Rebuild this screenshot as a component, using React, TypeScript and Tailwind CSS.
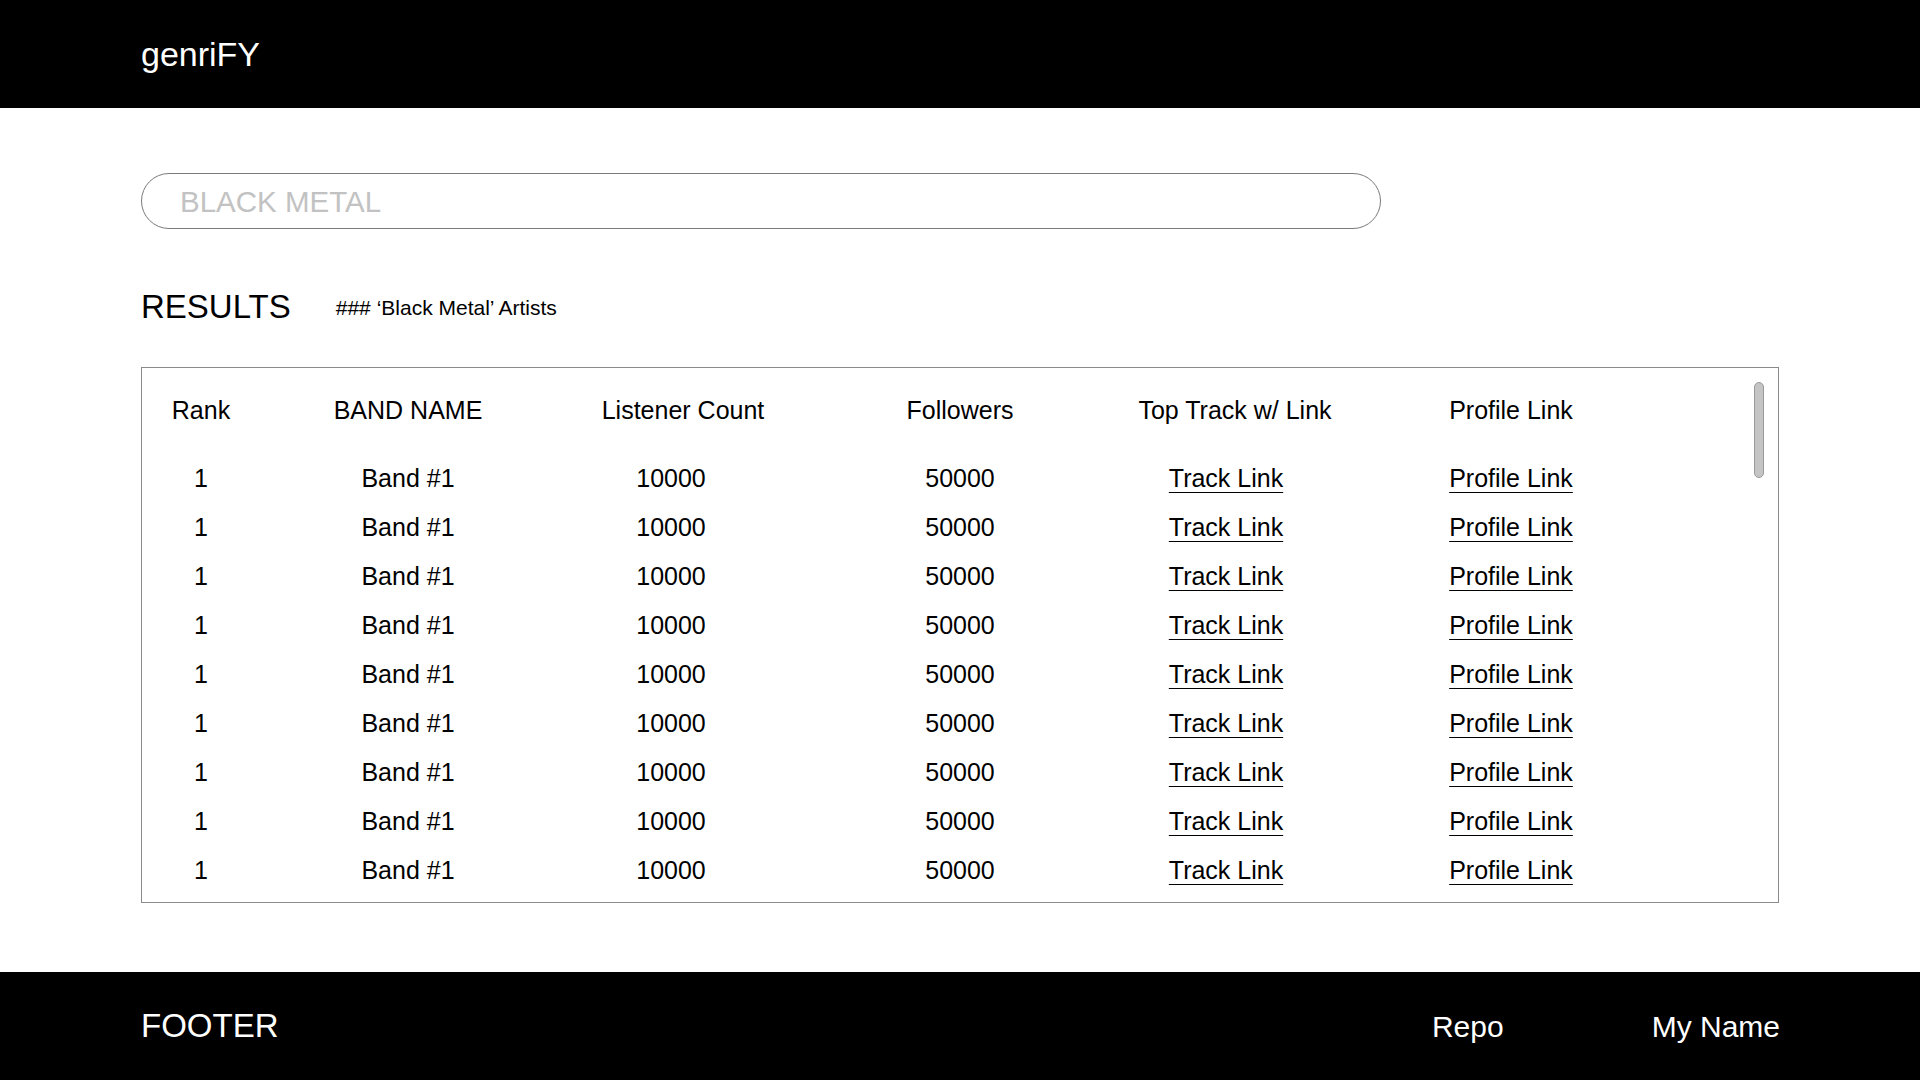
import React from 'react';

const FONT = { fontFamily: '"Liberation Sans", Arial, sans-serif' };

interface Artist {
  rank: number;
  name: string;
  listeners: number;
  followers: number;
}

const artists: Artist[] = Array.from({ length: 9 }, () => ({
  rank: 1,
  name: 'Band #1',
  listeners: 10000,
  followers: 50000,
}));

const cols = 'grid grid-cols-[118px_296px_230px_348px_184px_386px]';
const cell = 'flex justify-center whitespace-nowrap';

const Header: React.FC = () => (
  <header className="h-[108px] bg-black flex items-center px-[141px]">
    <span className="text-white text-[34px] leading-none">genriFY</span>
  </header>
);

const Footer: React.FC = () => (
  <footer className="h-[108px] bg-black flex items-center justify-between pl-[141px] pr-[140px] text-white">
    <span className="text-[33px] leading-none -mt-[2px]">FOOTER</span>
    <div className="flex items-center gap-[148px] text-[30px] leading-none mt-[2px]">
      <a href="#">Repo</a>
      <a href="#">My Name</a>
    </div>
  </footer>
);

const ResultsTable: React.FC<{ rows: Artist[] }> = ({ rows }) => (
  <div className="relative mt-[41px] h-[536px] border border-[#8a8a8a] overflow-hidden text-[25px] text-black">
    <div className="pt-[23px]">
      <div className={`${cols} h-[40px] items-center`}>
        <div className={cell}>Rank</div>
        <div className={cell}>BAND NAME</div>
        <div className={`${cell} pl-[24px]`}>Listener Count</div>
        <div className={cell}>Followers</div>
        <div className={`${cell} pl-[18px]`}>Top Track w/ Link</div>
        <div className={cell}>Profile Link</div>
      </div>
      <div className="mt-[23px]">
        {rows.map((a, i) => (
          <div key={i} className={`${cols} h-[49px] items-center`}>
            <div className={cell}>{a.rank}</div>
            <div className={cell}>{a.name}</div>
            <div className={cell}>{a.listeners}</div>
            <div className={cell}>{a.followers}</div>
            <div className={cell}>
              <a href="#" className="underline underline-offset-[5px] decoration-1">Track Link</a>
            </div>
            <div className={cell}>
              <a href="#" className="underline underline-offset-[5px] decoration-1">Profile Link</a>
            </div>
          </div>
        ))}
      </div>
    </div>
    {/* mock scrollbar */}
    <div className="absolute top-[14px] right-[14px] w-[10px] h-[96px] rounded-full bg-[#c4c4c4] border border-[#9a9a9a]" />
  </div>
);

export default function App() {
  return (
    <div className="min-h-screen flex flex-col bg-white" style={FONT}>
      <Header />
      <main className="flex-1 px-[141px] pt-[65px]">
        <div className="w-[1240px] h-[56px] rounded-full border border-[#7a7a7a] flex items-center pl-[38px] pt-[3px]">
          <input
            className="w-full outline-none bg-transparent text-[29.5px] text-black placeholder:text-[#c2c2c2]"
            placeholder="BLACK METAL"
            style={FONT}
          />
        </div>
        <div className="mt-[59px] flex items-center gap-[45px]">
          <h1 className="text-[33px] leading-[38px]">RESULTS</h1>
          <span className="text-[21px] pt-[2px]">### ‘Black Metal’ Artists</span>
        </div>
        <ResultsTable rows={artists} />
      </main>
      <Footer />
    </div>
  );
}
